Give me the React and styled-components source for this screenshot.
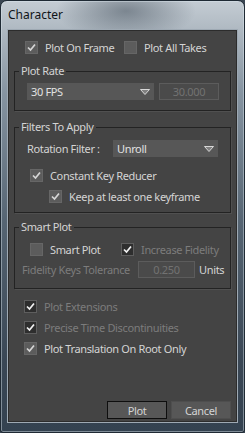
import React from "react";
import styled, { createGlobalStyle } from "styled-components";

const GlobalStyle = createGlobalStyle`
    html, body {
        margin: 0;
        padding: 0;
        background: #3a4652;
    }
    * {
        box-sizing: border-box;
    }
`;

const font = `"Noto Sans", "Open Sans", sans-serif`;

function Check({ checked, dark }) {
    return (
        <Box $dark={dark}>
            {checked && (
                <svg width="11" height="11" viewBox="0 0 11 11">
                    <polyline
                        points="2,5.5 4.5,8 9,2.5"
                        fill="none"
                        stroke={dark ? "#f2f2f2" : "#d6d6d6"}
                        strokeWidth="1.7"
                    />
                </svg>
            )}
        </Box>
    );
}

function Arrow() {
    return (
        <svg width="10" height="6" viewBox="0 0 10 6">
            <polygon points="0.5,0.5 9.5,0.5 5,5.5" fill="#808080" stroke="#d8d8d8" strokeWidth="1" />
        </svg>
    );
}

function CheckRow({ label, checked, dark, disabled, width, indent }) {
    return (
        <CheckItem $width={width} $indent={indent}>
            <Check checked={checked} dark={dark} />
            <Label $disabled={disabled}>{label}</Label>
        </CheckItem>
    );
}

export default function App() {
    return (
        <>
            <GlobalStyle />
            <Window>
                <TitleBar>Character</TitleBar>
                <Body>
                    <TopRow>
                        <CheckRow label="Plot On Frame" checked width={99} />
                        <CheckRow label="Plot All Takes" />
                    </TopRow>

                    <Group $top={10}>
                        <Legend>Plot Rate</Legend>
                        <GroupContent $pad="5px 0 10px 12px">
                            <Line>
                                <Select $width={127}>
                                    <span>30 FPS</span>
                                    <Arrow />
                                </Select>
                                <Field $width={60}>30.000</Field>
                            </Line>
                        </GroupContent>
                    </Group>

                    <Group $top={9}>
                        <Legend>Filters To Apply</Legend>
                        <GroupContent $pad="6px 0 9px 12px">
                            <Line>
                                <Label $width={81}>Rotation Filter :</Label>
                                <Select $width={105}>
                                    <span>Unroll</span>
                                    <Arrow />
                                </Select>
                            </Line>
                            <Stack $top={12}>
                                <CheckRow label="Constant Key Reducer" checked indent={3} />
                            </Stack>
                            <Stack $top={8}>
                                <CheckRow label="Keep at least one keyframe" checked indent={22} />
                            </Stack>
                        </GroupContent>
                    </Group>

                    <Group $top={7}>
                        <Legend>Smart Plot</Legend>
                        <GroupContent $pad="9px 0 10px 7px">
                            <Line $indent={8}>
                                <CheckRow label="Smart Plot" width={91} />
                                <CheckRow label="Increase Fidelity" checked dark disabled />
                            </Line>
                            <Line $top={5}>
                                <Label $disabled $width={111}>Fidelity Keys Tolerance</Label>
                                <Field $width={57}>0.250</Field>
                                <Label $gap={-1}>Units</Label>
                            </Line>
                        </GroupContent>
                    </Group>

                    <Options>
                        <CheckRow label="Plot Extensions" checked dark disabled />
                        <CheckRow label="Precise Time Discontinuities" checked dark disabled />
                        <CheckRow label="Plot Translation On Root Only" checked />
                    </Options>

                    <Buttons>
                        <Button $default>Plot</Button>
                        <Button>Cancel</Button>
                    </Buttons>
                </Body>
            </Window>
        </>
    );
}

const Window = styled.div`
    width: 245px;
    height: 433px;
    display: flex;
    flex-direction: column;
    border: 1px solid #1f2a34;
    border-radius: 7px 7px 3px 3px;
    padding: 0 6px 9px 6px;
    background:
        radial-gradient(ellipse 70px 30px at 125px 10px, rgba(70, 82, 94, 0.55), rgba(70, 82, 94, 0) 100%),
        linear-gradient(180deg, #c4ccd3 0px, #aeb8c1 30px, #8795a2 90px, #566573 220px, #3a4755 360px, #344250 100%);
    box-shadow: inset 0 0 0 1px rgba(220, 230, 238, 0.45);
    font-family: ${font};
`;

const TitleBar = styled.div`
    height: 28px;
    display: flex;
    align-items: center;
    padding: 0 0 1px 1px;
    font-size: 12px;
    color: #101418;
`;

const Body = styled.div`
    flex: 1;
    display: flex;
    flex-direction: column;
    padding: 0 6px 3px 6px;
    background: #444444;
    border: 1px solid #9ea9b3;
    box-shadow: inset 0 0 0 1px #2c2c2c;
    letter-spacing: -0.35px;
`;

const TopRow = styled.div`
    display: flex;
    margin-top: 11px;
    padding-left: 11px;
    height: 13px;
`;

const CheckItem = styled.div`
    display: flex;
    align-items: center;
    gap: 7px;
    height: 13px;
    width: ${({ $width }) => ($width ? `${$width}px` : "auto")};
    margin-left: ${({ $indent }) => $indent || 0}px;
    flex-shrink: 0;
`;

const Box = styled.div`
    width: 13px;
    height: 13px;
    flex-shrink: 0;
    display: flex;
    align-items: center;
    justify-content: center;
    background: ${({ $dark }) => ($dark ? "#2e2e2e" : "#5c5c5c")};
    border: 1px solid ${({ $dark }) => ($dark ? "#5e5e5e" : "#666666")};
`;

const Label = styled.span`
    font-size: 11px;
    line-height: 13px;
    white-space: nowrap;
    color: ${({ $disabled }) => ($disabled ? "#7c7c7c" : "#d4d4d4")};
    width: ${({ $width }) => ($width ? `${$width}px` : "auto")};
    margin-left: ${({ $gap }) => $gap || 0}px;
    flex-shrink: 0;
`;

const Group = styled.fieldset`
    margin: ${({ $top }) => $top}px 0 0 0;
    padding: 0;
    border: 1px solid #232323;
    box-shadow: 1px 1px 0 #505050;
    min-inline-size: 0;
`;

const GroupContent = styled.div`
    padding: ${({ $pad }) => $pad};
`;

const Legend = styled.legend`
    margin-left: 4px;
    padding: 0 2px;
    font-size: 11px;
    line-height: 14px;
    color: #d4d4d4;
`;

const Line = styled.div`
    display: flex;
    align-items: center;
    gap: 5px;
    height: 17px;
    margin-top: ${({ $top }) => $top || 0}px;
    padding-left: ${({ $indent }) => $indent || 0}px;
    ${({ $indent }) => ($indent ? "height: 13px; gap: 0;" : "")}
`;

const Stack = styled.div`
    margin-top: ${({ $top }) => $top}px;
`;

const Select = styled.div`
    width: ${({ $width }) => $width}px;
    height: 17px;
    display: flex;
    align-items: center;
    justify-content: space-between;
    padding: 0 4px 0 4px;
    background: #575757;
    font-size: 11px;
    color: #e2e2e2;
`;

const Field = styled.div`
    width: ${({ $width }) => $width}px;
    height: 17px;
    display: flex;
    align-items: center;
    justify-content: center;
    background: #4a4a4a;
    border: 1px solid #5c5c5c;
    font-size: 11px;
    color: #727272;
    flex-shrink: 0;
`;

const Options = styled.div`
    display: flex;
    flex-direction: column;
    gap: 8px;
    margin-top: 11px;
    padding-left: 10px;
`;

const Buttons = styled.div`
    display: flex;
    justify-content: flex-end;
    gap: 4px;
    margin-top: auto;
`;

const Button = styled.button`
    width: 60px;
    height: 18px;
    padding: 0;
    font-family: ${font};
    font-size: 11px;
    letter-spacing: -0.35px;
    color: #d4d4d4;
    background: #575757;
    border: 1px solid ${({ $default }) => ($default ? "#0e0e0e" : "#4e4e4e")};
`;
